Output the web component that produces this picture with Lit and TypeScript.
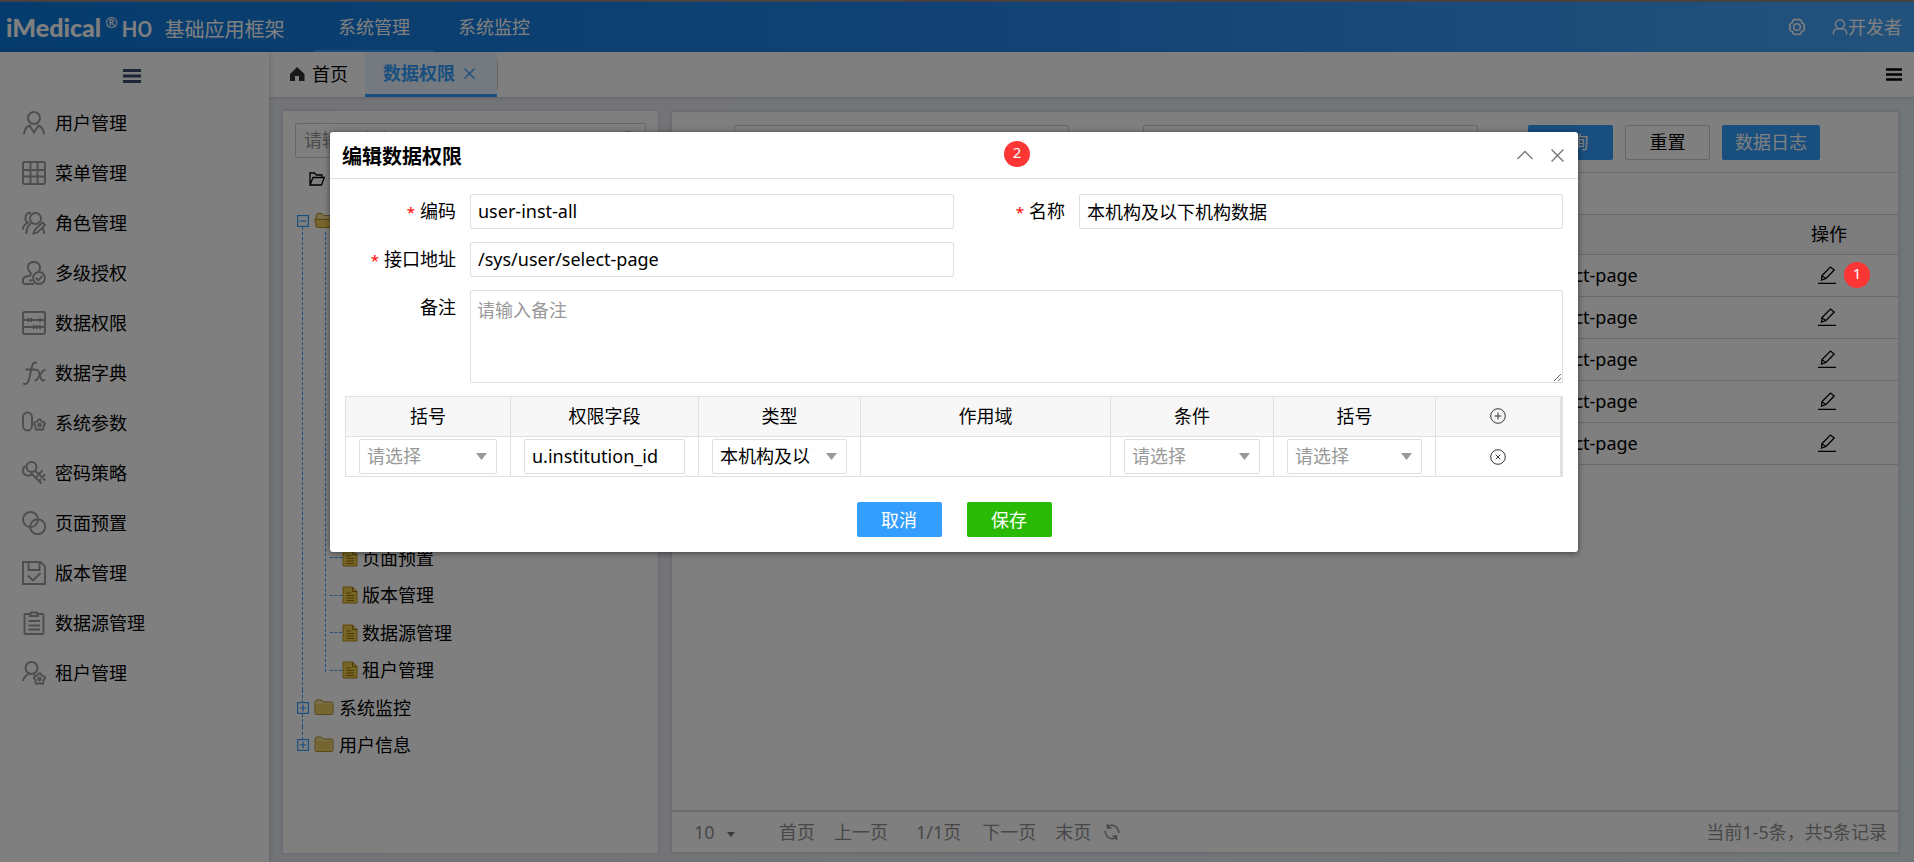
import { LitElement, html, css, svg, nothing } from "lit";
import { customElement, state } from "lit/decorators.js";

const gear = (cx: number, cy: number) => {
  const pts: string[] = [];
  for (let i = 0; i < 20; i++) {
    const a = ((i * 18 - 99) * Math.PI) / 180;
    const r = i % 4 < 2 ? 5.6 : 4.3;
    pts.push(`${(cx + r * Math.cos(a)).toFixed(2)} ${(cy + r * Math.sin(a)).toFixed(2)}`);
  }
  return svg`<path d="M${pts.join("L")}Z"/><circle cx=${cx} cy=${cy} r="1.3"/>`;
};

const icons: Record<string, unknown> = {
  user: svg`<circle cx="12" cy="7" r="6"/><path d="M2 23.500C2.500 19 4.500 15.500 7.500 14.500L12 21.500L16.500 14.500C19.500 15.500 21.500 19 22 23.500"/>`,
  grid: svg`<rect x="1" y="1" width="22" height="22" rx="1.500"/><path d="M8.500 1V23M15.500 1V23M1 9H23M1 15.500H23"/>`,
  role: svg`<circle cx="13.500" cy="7.500" r="5.500"/><path d="M9 1.800A5.200 5.200 0 0 0 6 11.500C3 13 1 15 .8 18.500M9.500 12C6 14 4.500 17.500 4.200 23"/><path d="M11.500 22.500L13 18.500L20.500 11.500L23.200 14L15.500 21.500ZM20.500 16.500C21.500 18.500 22 20.500 22.200 23"/>`,
  auth: svg`<path d="M8.800 12C3 6.500 6.500 1 12 1S20 6.500 16 11.500M8.800 12C9.500 14 8 15 5.500 15.200C2.500 15.400 1 16.500 1 19.500V21.500Q1 23 2.500 23H12M7 19.500H10.500"/><circle cx="17" cy="17" r="6"/><path d="M13.800 17L16.300 19.300L20.500 14.800"/>`,
  abacus: svg`<rect x="1" y="1" width="22" height="22" rx="1.500"/><path d="M1 9H23M1 16H23M6 7V11M9 7V11M18 7V11M12 14V18M15 14V18M18 14V18"/>`,
  fx: svg`<path d="M15 2C12.500 .5 10.800 2 10 5.500L7 18.500C6 22.500 4 23.800 1 22.500M3.500 8.500H14"/><path d="M13.500 9.500C16 8 16.500 9.500 17.200 12.500L18.800 17C19.500 20 21 20.300 23 18.500M23.500 9C21 8.500 20 11 18 14S15 20 12.500 19.500"/>`,
  param: svg`<rect x="1" y="1.500" width="9" height="18" rx="4.500"/>${gear(17.5, 14)}`,
  key: svg`<circle cx="9.500" cy="6" r="5"/><path d="M13 9.700L23.500 19.500M17 13L20.500 9.500M20 16.200L23 13.500M3 5C-.5 8.500 .5 13 4.500 14.300C6.500 15 8.500 14.500 10 13L19.500 22.500M13.500 16.500L16 14.500M17 20L19 18"/>`,
  rings: svg`<circle cx="8.500" cy="8.500" r="7.500"/><circle cx="15.700" cy="15.700" r="7.500"/>`,
  save: svg`<path d="M1 1H18.500L23 5.500V23H1ZM6.500 1V9H17.500V1M6 14.500L11 19.500L18.500 12"/>`,
  clip: svg`<path d="M8 3H3.500Q2.500 3 2.500 4V22Q2.500 23 3.500 23H20.500Q21.500 23 21.500 22V4Q21.500 3 20.500 3H16"/><path d="M8 5L9 1.500H15L16 5ZM6.500 10H18M6.500 14.500H18M6.500 18.500H18"/>`,
  tenant: svg`<circle cx="9.500" cy="7" r="6"/><path d="M1 20C1.500 16.500 4 14.500 6.200 13.200M11.500 14L13 13"/>${gear(17.5, 18)}`,
};

const menu: [string, string][] = [
  ["user", "用户管理"],
  ["grid", "菜单管理"],
  ["role", "角色管理"],
  ["auth", "多级授权"],
  ["abacus", "数据权限"],
  ["fx", "数据字典"],
  ["param", "系统参数"],
  ["key", "密码策略"],
  ["rings", "页面预置"],
  ["save", "版本管理"],
  ["clip", "数据源管理"],
  ["tenant", "租户管理"],
];

const expander = (open: boolean) => html`<svg class="expander" viewBox="0 0 12 12" width="12" height="12">
  <rect x=".6" y=".6" width="10.800" height="10.800" fill="none" stroke="#339eff" stroke-width="1.200" />
  <path d=${open ? "M2.500 6H9.500" : "M2.500 6H9.500M6 2.500V9.500"} stroke="#339eff" stroke-width="1.200" />
</svg>`;

const folder = (open: boolean) =>
  open
    ? html`<svg viewBox="0 0 20 17" width="20" height="17">
        <path d="M2 15V3.500L3.500 1.500H8L10 3.500H17V8" fill="#f5dc92" stroke="#b58a2a" />
        <path d="M.8 7.500H19L16.500 15.500H3Z" fill="#f0cc58" stroke="#b58a2a" />
      </svg>`
    : html`<svg viewBox="0 0 20 17" width="20" height="17">
        <path d="M1 14V3L2.500 1H7.500L9 3H17.500Q19 3 19 4.500V14Q19 15.500 17.500 15.500H2.500Q1 15.500 1 14Z" fill="#f3dc8c" stroke="#b58a2a" />
        <path d="M2.500 5H17.500V14.500H2.500Z" fill="#ebcb5c" />
      </svg>`;

const fileIcon = html`<svg viewBox="0 0 16 18" width="16" height="18">
  <path d="M1 1H10.500L15 5.500V17H1Z" fill="#ecca4b" stroke="#b98f1e" />
  <path d="M10.500 1V5.500H15M4.500 7H9M4.500 9.500H12M4.500 12H12M4.500 14.500H12" fill="none" stroke="#94700e" />
</svg>`;

const closeIcon = (size: number) => html`<svg viewBox="0 0 12 12" width=${size} height=${size}>
  <path d="M.5 .5L11.500 11.500M11.500 .5L.5 11.500" fill="none" stroke="currentColor" stroke-width="1.300" />
</svg>`;

@customElement("app-root")
export class AppRoot extends LitElement {
  static styles = css`
    :host {
      display: block;
      position: relative;
      height: 100vh;
      overflow: hidden;
      font: 18px/24px "Noto Sans", "Noto Sans CJK SC", sans-serif;
      color: #000;
    }
    * { box-sizing: border-box; }
    svg { display: block; flex: none; }
    ul { list-style: none; margin: 0; padding: 0; }
    a { color: inherit; text-decoration: none; }
    button, input, select, textarea { font: inherit; color: inherit; margin: 0; }
    button { padding: 0; border: 0; background: none; cursor: pointer; }
    .page { display: flex; flex-direction: column; height: 100%; }

    .header {
      display: flex;
      align-items: center;
      height: 52px;
      border-top: 2px solid #8c8583;
      background: linear-gradient(90deg, #0c79da, #2384ea 50%, #45a5f8);
      color: #fff;
    }
    .brand { display: flex; align-items: baseline; width: 314px; padding-left: 6px; white-space: nowrap; }
    .logo { font: 900 25px/40px Lato, sans-serif; }
    .reg { font-size: 15px; align-self: flex-start; line-height: 30px; margin-left: 4px; }
    .ho { font-family: Roboto, sans-serif; font-weight: 500; font-size: 22px; margin-left: 4px; }
    .product { font-size: 20px; margin-left: 12px; }
    .nav { display: flex; align-self: stretch; flex: 1; }
    .nav a { display: flex; align-items: center; justify-content: center; width: 120px; padding-top: 2px; border-bottom: 2px solid transparent; }
    .nav a.on { border-color: #3d9cf5; }
    .tools { display: flex; align-items: center; gap: 26px; padding-right: 12px; }
    .me { display: flex; align-items: center; }

    .body { display: flex; flex: 1; min-height: 0; }
    .side { flex: none; width: 269px; background: #fff; box-shadow: 0 0 6px rgba(0, 0, 0, 0.2); z-index: 1; }
    .fold { display: flex; align-items: center; justify-content: center; width: 100%; height: 47px; padding-right: 6px; }
    .side a { display: flex; align-items: center; gap: 9px; height: 50px; padding: 0 0 2px 22px; }
    .side svg { fill: none; stroke: #9a9a9a; stroke-width: 1.900; }
    .side .burger { stroke: #3c4a6c; stroke-width: 3; }

    .main { flex: 1; min-width: 0; display: flex; flex-direction: column; background: linear-gradient(90deg, #e6e8f1, #e2ecf2); }
    .tabs { display: flex; align-items: center; height: 45px; background: #fff; box-shadow: 0 1px 3px rgba(0, 0, 0, 0.15); }
    .tab { display: flex; align-items: center; height: 45px; }
    .tab.home { gap: 7px; width: 96px; padding: 0 0 2px 20px; }
    .tab.on {
      gap: 9px;
      width: 132px;
      padding-left: 18px;
      border-bottom: 3px solid #339eff;
      background: #e8f4fe;
      color: #339eff;
      font-weight: 700;
    }
    .sep { width: 1px; height: 30px; background: #ccc; }
    .more { margin-left: auto; margin-right: 12px; }

    .panels { display: flex; flex: 1; gap: 13px; padding: 14px 15px 9px 14px; min-height: 0; }
    .card { background: #fff; box-shadow: 0 0 4px rgba(0, 0, 0, 0.12); }
    .treebox { flex: none; width: 375px; padding: 12px; }
    .search { display: flex; align-items: center; justify-content: space-between; height: 35px; padding: 0 8px; border: 1px solid #ccc; border-radius: 2px; }
    .search input { width: 280px; border: 0; outline: 0; padding: 0 0 2px; background: none; }
    ::placeholder { color: #999; opacity: 1; }
    .all { display: flex; align-items: center; height: 45px; padding: 0 14px 3px; }
    .tree > li { position: relative; }
    .tree > li::before { content: ""; position: absolute; left: 7px; top: 0; bottom: 0; border-left: 1px dashed #339eff; }
    .tree > li:first-child::before { top: 24px; }
    .tree > li:last-child::before { bottom: 14px; }
    .node { display: flex; align-items: center; gap: 5px; height: 37px; padding: 0 0 2px 2px; position: relative; }
    .expander { background: #fff; }
    .kids { display: grid; grid-auto-rows: 1fr; height: 450px; margin-left: 30px; position: relative; }
    .kids::before { content: ""; position: absolute; left: 0; top: -8px; bottom: 18px; border-left: 1px dashed #339eff; }
    .kids li { display: flex; align-items: center; padding-bottom: 2px; }
    .kids li::before { content: ""; width: 12px; margin-left: 5px; border-top: 1px dashed #339eff; }
    .kids a { display: flex; align-items: center; gap: 4px; }

    .list { flex: 1; min-width: 0; display: flex; flex-direction: column; border: 1px solid #dcdcdc; }
    .filters { display: flex; justify-content: flex-end; align-items: center; height: 61px; padding-right: 78px; border-bottom: 1px dotted #bbb; gap: 12px; }
    .filters label { display: flex; flex: none; align-items: center; gap: 14px; margin-right: 12px; white-space: nowrap; }
    .filters label + .btn { margin-left: 26px; }
    .filters input { width: 335px; }
    .box { height: 35px; padding: 0 7px 2px; border: 1px solid #dcdfe6; border-radius: 2px; background: #fff; outline: 0; }
    .filters .box { border-color: #ccc; }
    .btn { flex: none; height: 35px; width: 85px; border-radius: 2px; background: #339eff; color: #fff; }
    .btn.plain { background: #fff; color: #000; border: 1px solid #ccc; }
    .btn.wide { width: 98px; }
    .bar { height: 41px; }
    .grid { width: 100%; border-collapse: separate; border-spacing: 0; table-layout: fixed; }
    .grid th { height: 41px; padding: 0 8px 2px; font-weight: 400; text-align: left; background: #f9f9f9; border: solid #d4d4d4; border-width: 1px 0; }
    .grid td { height: 42px; padding: 0 8px 2px; border-bottom: 1px solid #d4d4d4; white-space: nowrap; }
    .grid .url { width: 311px; }
    .grid .act { width: 138px; text-align: center; }
    .grid .act button { display: block; margin: 0 auto; padding-right: 4px; }
    .pager { display: flex; align-items: center; margin-top: auto; height: 42px; padding: 0 11px 0 16px; border-top: 2px solid #d9d9d9; color: #8f8f8f; }
    .size { position: relative; }
    .size select { width: 48px; margin-right: 24px; padding: 0 0 0 6px; border: 0; appearance: none; background: none; color: inherit; }
    .size svg { position: absolute; left: 39px; top: 12px; }
    .pager button, .pager span { margin-right: 19px; }
    .pager .now { margin: 0 21px 0 9px; }
    .pager .last { margin-right: 13px; }
    .pager .total { margin: 0 0 0 auto; }

    .mask { position: absolute; inset: 0; padding: 132px 6px 0 0; background: rgba(0, 0, 0, 0.5); z-index: 5; }
    .dialog { width: 1248px; max-width: 96%; margin: 0 auto; background: #fff; border-radius: 3px; box-shadow: 0 1px 6px rgba(0, 0, 0, 0.5); }
    .dhead { display: flex; align-items: center; height: 47px; padding: 0 14px 0 12px; border-bottom: 1px solid #dfdfe3; }
    .dhead h2 { flex: 1; margin: 0; padding-top: 3px; font-size: 20px; line-height: 30px; }
    .dhead button { color: #777; margin-left: 18px; }
    .dbody { display: flex; flex-direction: column; gap: 13px; padding: 15px; }
    .form { display: grid; grid-template-columns: 125px 1fr 125px 1fr; row-gap: 13px; }
    .form label { text-align: right; padding-right: 14px; line-height: 34px; height: 35px; }
    .req { color: #f00; margin-right: 5px; font-size: 15px; }
    .form input { width: 100%; }
    .form textarea { grid-column: 2 / -1; display: block; width: 100%; height: 93px; padding: 7px 6px; }
    .rules { width: 100%; border-collapse: separate; border-spacing: 0; table-layout: fixed; border: solid #e0e0e0; border-width: 1px 0 0 1px; }
    .rules th, .rules td { height: 40px; padding: 0 13px; border: solid #e0e0e0; border-width: 0 1px 1px 0; font-weight: 400; text-align: center; }
    .rules th { background: #f7f7f7; padding-bottom: 1px; }
    .rules th:last-child, .rules td:last-child { border-right-width: 3px; }
    .rules .box { display: block; width: 100%; }
    .pick { position: relative; display: block; }
    .rules .pick select { appearance: none; padding: 0 35px 2px 7px; }
    .pick .hint { color: #999; }
    .pick svg { position: absolute; right: 10px; top: 14px; pointer-events: none; }
    .rules button { display: block; margin: 0 auto; }
    .actions { display: flex; justify-content: center; gap: 25px; margin-top: 12px; }
    .btn.save { background: #28ba05; }
    .badge {
      position: absolute;
      width: 26px;
      height: 26px;
      border-radius: 50%;
      background: #fc3535;
      color: #fff;
      font-size: 15px;
      line-height: 23px;
      text-align: center;
    }
    .b1 { right: 44px; top: 262px; }
    .b2 { left: 1004px; top: 141px; }
  `;

  @state() private rules = [{ field: "u.institution_id" }];

  private picker(label: string, hint: boolean, text: string) {
    return html`<span class="pick">
      <select class="box ${hint ? "hint" : ""}" aria-label=${label}><option>${text}</option></select>
      <svg viewBox="0 0 11 7" width="11" height="7"><path d="M0 0H11L5.500 7Z" fill="#999" /></svg>
    </span>`;
  }

  private pageView() {
    const kids = menu.map(([, t]) => t);
    return html`
      <header class="header">
        <div class="brand">
          <span class="logo">iMedical</span><span class="reg">®</span><span class="ho">HO</span><span class="product">基础应用框架</span>
        </div>
        <nav class="nav"><a class="on" href="#">系统管理</a><a href="#">系统监控</a></nav>
        <div class="tools">
          <button aria-label="设置">
            <svg viewBox="0 0 18 18" width="18" height="18" fill="none" stroke="#fff" stroke-width="1.500">
              <path d="M7 1.200L9 2L11 1.200L13.300 2.500L13.700 4.600L15.300 5.300L16.600 7.500L15.500 9L16.600 10.800L15.300 12.900L13.500 13.400L13 15.500L11 16.700L9 16L7 16.700L5 15.500L4.500 13.400L2.700 12.900L1.400 10.800L2.500 9L1.400 7.500L2.700 5.300L4.300 4.600L4.800 2.500Z" />
              <circle cx="9" cy="9" r="3.300" />
            </svg>
          </button>
          <a class="me" href="#">
            <svg viewBox="0 0 17 18" width="16" height="18" fill="none" stroke="#fff" stroke-width="1.500">
              <circle cx="8.500" cy="6" r="4.700" /><path d="M1.500 17V15.500C1.500 12.500 3.500 11 6 11H11C13.500 11 15.500 12.500 15.500 15.500V17" />
            </svg>开发者</a>
        </div>
      </header>
      <div class="body">
        <nav class="side">
          <button class="fold" aria-label="折叠菜单">
            <svg class="burger" viewBox="0 0 18 14" width="18" height="14"><path d="M0 1.500H18M0 7H18M0 12.500H18" /></svg>
          </button>
          ${menu.map(([icon, text]) => html`<a href="#"><svg viewBox="0 0 24 24" width="24" height="24">${icons[icon]}</svg>${text}</a>`)}
        </nav>
        <main class="main">
          <div class="tabs">
            <a class="tab home" href="#">
              <svg viewBox="0 0 16 14" width="16" height="14"><path d="M8 0L15.500 7V14H10V9H6V14H1V7Z" fill="#333" /></svg>首页</a>
            <a class="tab on" href="#">数据权限${closeIcon(11)}</a>
            <span class="sep"></span>
            <button class="more" aria-label="更多">
              <svg viewBox="0 0 16 13" width="16" height="13"><path d="M0 1.500H16M0 6.500H16M0 11.500H16" stroke="#000" stroke-width="2.600" /></svg>
            </button>
          </div>
          <div class="panels">
            <section class="card treebox">
              <div class="search">
                <input aria-label="搜索菜单" placeholder="请输入内容" />
                <svg viewBox="0 0 18 20" width="18" height="20" fill="none" stroke="#888" stroke-width="1.500"><circle cx="9" cy="8" r="7" /><path d="M13 14L17 19" /></svg>
              </div>
              <div class="all">
                <svg viewBox="0 0 16 14" width="16" height="14" fill="none" stroke="#000" stroke-width="1.300"><path d="M1 13V1H5.500L7.500 3H13V5.500M1 13H12.500L15.300 5.500H4Z" /></svg>
              </div>
              <ul class="tree">
                <li>
                  <div class="node">${expander(true)}${folder(true)}<a href="#">系统管理</a></div>
                  <ul class="kids">${kids.map((t) => html`<li><a href="#">${fileIcon}${t}</a></li>`)}</ul>
                </li>
                ${["系统监控", "用户信息"].map((t) => html`<li><div class="node">${expander(false)}${folder(false)}<a href="#">${t}</a></div></li>`)}
              </ul>
            </section>
            <section class="card list">
              <div class="filters">
                <label>编码<input class="box" /></label>
                <label>名称<input class="box" /></label>
                <button class="btn">查询</button>
                <button class="btn plain">重置</button>
                <button class="btn wide">数据日志</button>
              </div>
              <div class="bar"></div>
              <table class="grid">
                <thead>
                  <tr><th>编码</th><th>名称</th><th class="url">接口地址</th><th class="act">操作</th></tr>
                </thead>
                <tbody>
                  ${[0, 1, 2, 3, 4].map(
                    (i) => html`<tr>
                      <td>${i ? nothing : "user-inst-all"}</td>
                      <td>${i ? nothing : "本机构及以下"}</td>
                      <td class="url">/sys/user/select-page</td>
                      <td class="act">
                        <button aria-label="编辑">
                          <svg viewBox="0 0 18 18" width="18" height="18" fill="none" stroke="#000" stroke-width="1.300">
                            <path d="M0 17.300H18M3.500 14L4 9.500L12.500 1L16.200 4L8 12.500ZM4 9.800L7.800 12.500" />
                          </svg>
                        </button>
                      </td>
                    </tr>`
                  )}
                </tbody>
              </table>
              <footer class="pager">
                <span class="size">
                  <select aria-label="每页条数"><option>10</option></select>
                  <svg viewBox="0 0 8 5" width="8" height="5"><path d="M0 0H8L4 5Z" fill="#777" /></svg>
                </span>
                <button>首页</button><button>上一页</button><span class="now">1/1页</span><button>下一页</button><button class="last">末页</button>
                <button aria-label="刷新">
                  <svg viewBox="0 0 16 16" width="16" height="16" fill="none" stroke="#8f8f8f" stroke-width="1.500">
                    <path d="M4 2.500C9 -.5 14.500 3 14.800 9M12 13.500C7 16.500 1.500 13 1.200 7" /><path d="M3.500 0V4H7.500M12.500 16V12H8.500" />
                  </svg>
                </button>
                <span class="total">当前1-5条，共5条记录</span>
              </footer>
            </section>
          </div>
        </main>
      </div>
    `;
  }

  private dialogView() {
    return html`
      <section class="dialog" role="dialog" aria-labelledby="title">
        <header class="dhead">
          <h2 id="title">编辑数据权限</h2>
          <button aria-label="收起">
            <svg viewBox="0 0 16 10" width="16" height="10"><path d="M.5 9L8 1.500L15.500 9" fill="none" stroke="currentColor" stroke-width="1.300" /></svg>
          </button>
          <button aria-label="关闭">${closeIcon(13)}</button>
        </header>
        <div class="dbody">
          <div class="form">
            <label for="code"><span class="req">*</span>编码</label>
            <input id="code" class="box" .value=${"user-inst-all"} />
            <label for="name"><span class="req">*</span>名称</label>
            <input id="name" class="box" .value=${"本机构及以下机构数据"} />
            <label for="url"><span class="req">*</span>接口地址</label>
            <input id="url" class="box" .value=${"/sys/user/select-page"} />
            <span></span><span></span>
            <label for="note">备注</label>
            <textarea id="note" class="box" placeholder="请输入备注"></textarea>
          </div>
          <table class="rules">
            <colgroup>
              <col width="165" /><col width="188" /><col width="162" /><col width="250" /><col width="163" /><col width="162" /><col width="127" />
            </colgroup>
            <thead>
              <tr>
                <th>括号</th><th>权限字段</th><th>类型</th><th>作用域</th><th>条件</th><th>括号</th>
                <th>
                  <button aria-label="添加">
                    <svg viewBox="0 0 16 16" width="16" height="16" fill="none" stroke="#333"><circle cx="8" cy="8" r="7.300" /><path d="M4.500 8H11.500M8 4.500V11.500" /></svg>
                  </button>
                </th>
              </tr>
            </thead>
            <tbody>
              ${this.rules.map(
                (r) => html`<tr>
                  <td>${this.picker("左括号", true, "请选择")}</td>
                  <td><input class="box" aria-label="权限字段" .value=${r.field} /></td>
                  <td>${this.picker("类型", false, "本机构及以下机构")}</td>
                  <td></td>
                  <td>${this.picker("条件", true, "请选择")}</td>
                  <td>${this.picker("右括号", true, "请选择")}</td>
                  <td>
                    <button aria-label="删除">
                      <svg viewBox="0 0 16 16" width="16" height="16" fill="none" stroke="#333"><circle cx="8" cy="8" r="7.300" /><path d="M5.700 5.700L10.300 10.300M10.300 5.700L5.700 10.300" /></svg>
                    </button>
                  </td>
                </tr>`
              )}
            </tbody>
          </table>
          <div class="actions">
            <button class="btn">取消</button>
            <button class="btn save">保存</button>
          </div>
        </div>
      </section>
      <span class="badge b1">1</span>
      <span class="badge b2">2</span>
    `;
  }

  render() {
    return html`<div class="page">${this.pageView()}</div>
      <div class="mask">${this.dialogView()}</div>`;
  }
}
